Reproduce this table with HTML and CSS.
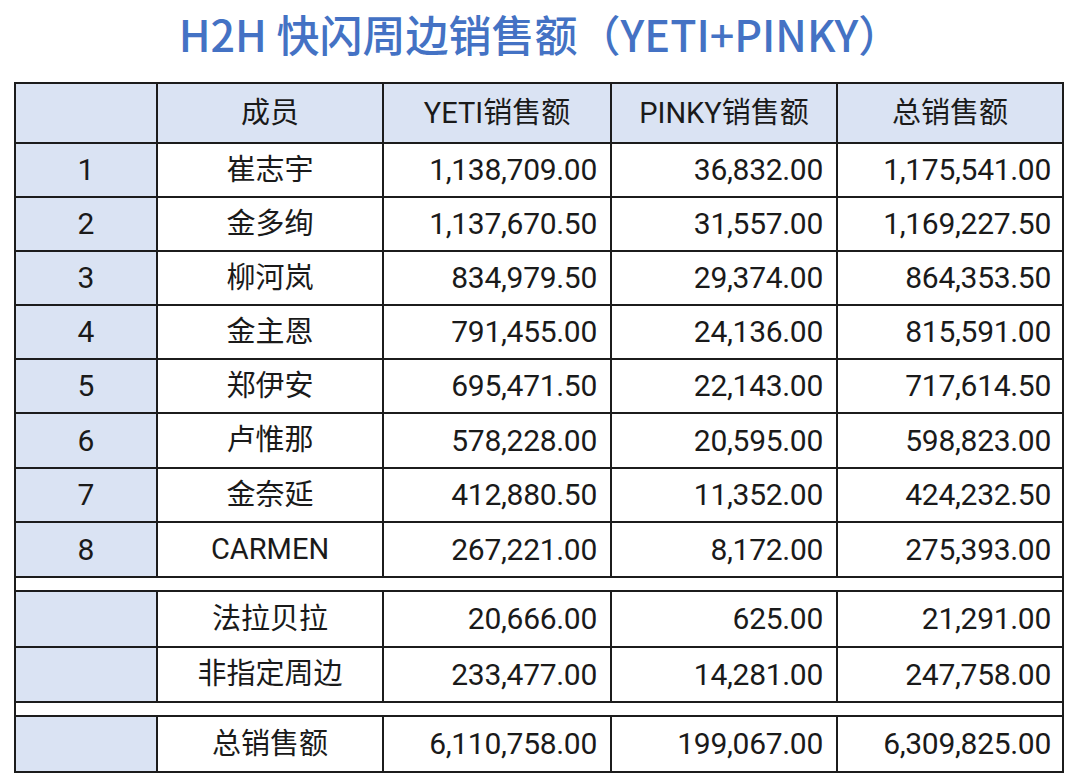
FILE: index.html
```html
<!DOCTYPE html>
<html lang="zh-CN">
<head>
<meta charset="utf-8">
<title>H2H 快闪周边销售额</title>
<link rel="stylesheet" href="styles.css">
</head>
<body>
<h1 class="title">H2H 快闪周边销售额（YETI+PINKY）</h1>
<div class="sheet">
  <div class="c hd"></div>
  <div class="c hd">成员</div>
  <div class="c hd">YETI销售额</div>
  <div class="c hd">PINKY销售额</div>
  <div class="c hd">总销售额</div>

  <div class="c idx">1</div><div class="c name">崔志宇</div><div class="c num">1,138,709.00</div><div class="c num">36,832.00</div><div class="c num last">1,175,541.00</div>
  <div class="c idx">2</div><div class="c name">金多绚</div><div class="c num">1,137,670.50</div><div class="c num">31,557.00</div><div class="c num last">1,169,227.50</div>
  <div class="c idx">3</div><div class="c name">柳河岚</div><div class="c num">834,979.50</div><div class="c num">29,374.00</div><div class="c num last">864,353.50</div>
  <div class="c idx">4</div><div class="c name">金主恩</div><div class="c num">791,455.00</div><div class="c num">24,136.00</div><div class="c num last">815,591.00</div>
  <div class="c idx">5</div><div class="c name">郑伊安</div><div class="c num">695,471.50</div><div class="c num">22,143.00</div><div class="c num last">717,614.50</div>
  <div class="c idx">6</div><div class="c name">卢惟那</div><div class="c num">578,228.00</div><div class="c num">20,595.00</div><div class="c num last">598,823.00</div>
  <div class="c idx">7</div><div class="c name">金奈延</div><div class="c num">412,880.50</div><div class="c num">11,352.00</div><div class="c num last">424,232.50</div>
  <div class="c idx">8</div><div class="c name">CARMEN</div><div class="c num">267,221.00</div><div class="c num">8,172.00</div><div class="c num last">275,393.00</div>

  <div class="spacer"></div>

  <div class="c idx"></div><div class="c name">法拉贝拉</div><div class="c num">20,666.00</div><div class="c num">625.00</div><div class="c num last">21,291.00</div>
  <div class="c idx"></div><div class="c name">非指定周边</div><div class="c num">233,477.00</div><div class="c num">14,281.00</div><div class="c num last">247,758.00</div>

  <div class="spacer"></div>

  <div class="c idx"></div><div class="c name">总销售额</div><div class="c num">6,110,758.00</div><div class="c num">199,067.00</div><div class="c num last">6,309,825.00</div>
</div>
</body>
</html>
```

FILE: styles.css
```css
html, body {
  margin: 0;
  padding: 0;
  background: #ffffff;
}

body {
  font-family: Roboto, "Noto Sans CJK SC", sans-serif;
  color: #1a1a1a;
}

.title {
  margin: 0;
  height: 66px;
  padding-bottom: 16px;
  display: flex;
  align-items: center;
  justify-content: center;
  font-family: "Noto Sans CJK SC", sans-serif;
  font-weight: 500;
  font-size: 43px;
  color: #4472c4;
  letter-spacing: 0;
}

.sheet {
  margin-left: 14px;
  width: fit-content;
  display: grid;
  grid-template-columns: 140px 224px 226px 224px 224px;
  grid-template-rows: 58px 52px 52px 52px 52px 52px 53px 52px 53px 12px 54px 53px 12px 54px;
  gap: 2px;
  border: 2px solid #1c1c1c;
  background: #1c1c1c;
}

.c {
  background: #ffffff;
  display: flex;
  align-items: center;
  justify-content: center;
  font-size: 29px;
  line-height: 1;
  white-space: nowrap;
}

.hd {
  background: #dae3f3;
}

.idx {
  background: #dae3f3;
  font-size: 30px;
}

.num {
  justify-content: flex-end;
  padding-right: 13px;
  font-size: 30px;
  letter-spacing: -0.3px;
}

.num.last {
  padding-right: 11px;
}

.spacer {
  grid-column: 1 / -1;
  background: #ffffff;
}
```
